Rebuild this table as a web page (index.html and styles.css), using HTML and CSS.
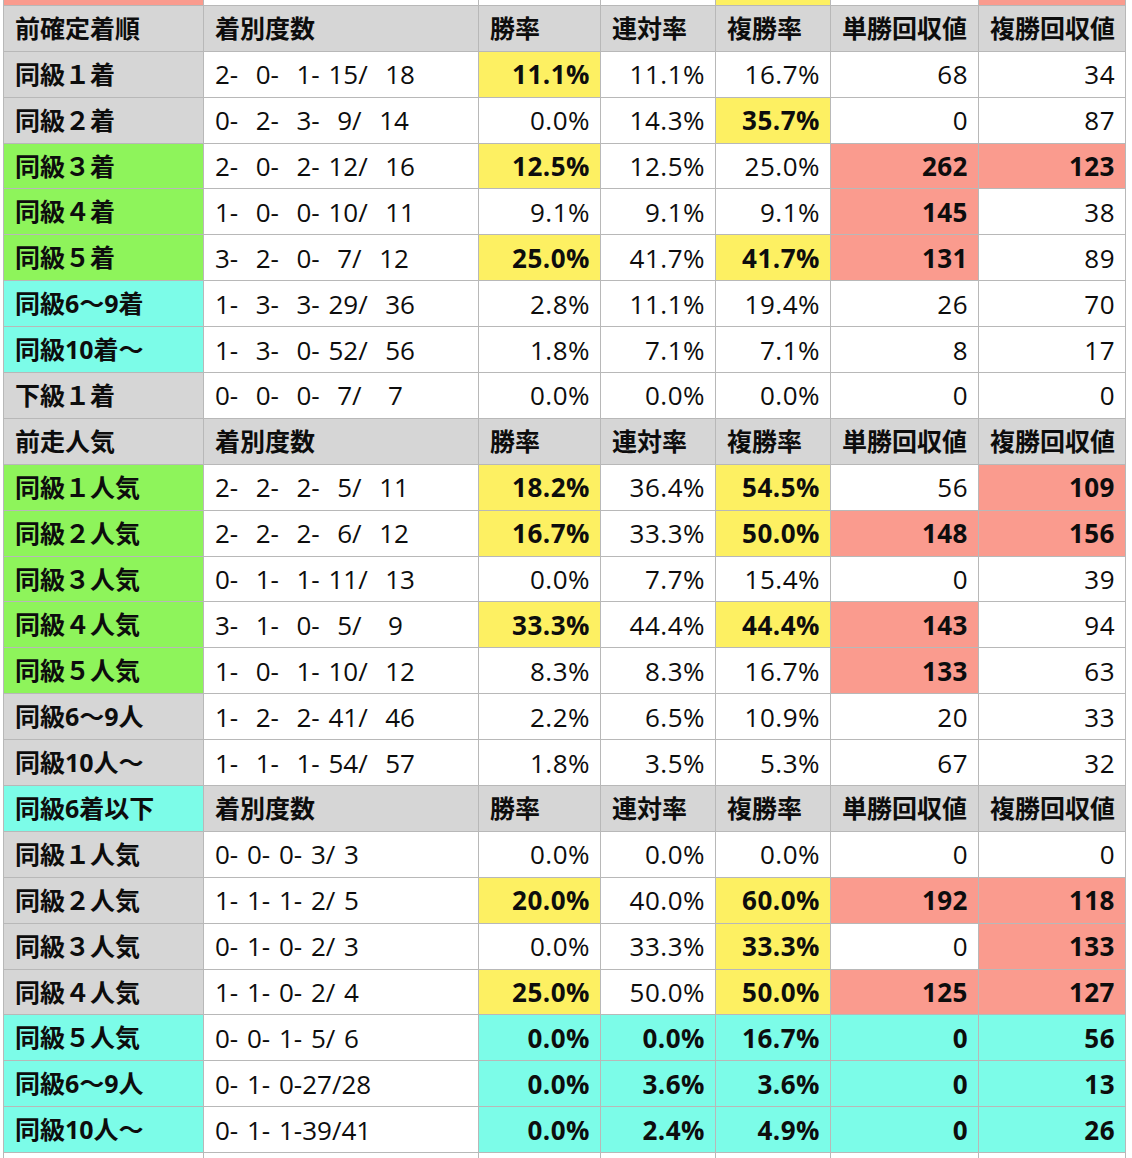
FILE: index.html
```html
<!DOCTYPE html>
<html lang="ja">
<head>
<meta charset="utf-8">
<title>成績表</title>
<link rel="stylesheet" href="styles.css">
</head>
<body>
<div class="sheet">
  <div class="row stub">
    <div class="s"></div><div></div><div></div><div></div><div class="y"></div><div></div><div class="s"></div>
  </div>

  <div class="row head">
    <div class="g lbl">前確定着順</div><div class="g lbl">着別度数</div><div class="g lbl">勝率</div><div class="g lbl">連対率</div><div class="g lbl">複勝率</div><div class="g lbl">単勝回収値</div><div class="g lbl">複勝回収値</div>
  </div>
  <div class="row">
    <div class="g lbl">同級１着</div><div class="cnt">2-  0-  1- 15/  18</div><div class="n y b">11.1%</div><div class="n">11.1%</div><div class="n">16.7%</div><div class="n">68</div><div class="n">34</div>
  </div>
  <div class="row">
    <div class="g lbl">同級２着</div><div class="cnt">0-  2-  3-  9/  14</div><div class="n">0.0%</div><div class="n">14.3%</div><div class="n y b">35.7%</div><div class="n">0</div><div class="n">87</div>
  </div>
  <div class="row">
    <div class="gr lbl">同級３着</div><div class="cnt">2-  0-  2- 12/  16</div><div class="n y b">12.5%</div><div class="n">12.5%</div><div class="n">25.0%</div><div class="n s b">262</div><div class="n s b">123</div>
  </div>
  <div class="row">
    <div class="gr lbl">同級４着</div><div class="cnt">1-  0-  0- 10/  11</div><div class="n">9.1%</div><div class="n">9.1%</div><div class="n">9.1%</div><div class="n s b">145</div><div class="n">38</div>
  </div>
  <div class="row">
    <div class="gr lbl">同級５着</div><div class="cnt">3-  2-  0-  7/  12</div><div class="n y b">25.0%</div><div class="n">41.7%</div><div class="n y b">41.7%</div><div class="n s b">131</div><div class="n">89</div>
  </div>
  <div class="row">
    <div class="c lbl">同級6～9着</div><div class="cnt">1-  3-  3- 29/  36</div><div class="n">2.8%</div><div class="n">11.1%</div><div class="n">19.4%</div><div class="n">26</div><div class="n">70</div>
  </div>
  <div class="row">
    <div class="c lbl">同級10着～</div><div class="cnt">1-  3-  0- 52/  56</div><div class="n">1.8%</div><div class="n">7.1%</div><div class="n">7.1%</div><div class="n">8</div><div class="n">17</div>
  </div>
  <div class="row">
    <div class="g lbl">下級１着</div><div class="cnt">0-  0-  0-  7/   7</div><div class="n">0.0%</div><div class="n">0.0%</div><div class="n">0.0%</div><div class="n">0</div><div class="n">0</div>
  </div>

  <div class="row head">
    <div class="g lbl">前走人気</div><div class="g lbl">着別度数</div><div class="g lbl">勝率</div><div class="g lbl">連対率</div><div class="g lbl">複勝率</div><div class="g lbl">単勝回収値</div><div class="g lbl">複勝回収値</div>
  </div>
  <div class="row">
    <div class="gr lbl">同級１人気</div><div class="cnt">2-  2-  2-  5/  11</div><div class="n y b">18.2%</div><div class="n">36.4%</div><div class="n y b">54.5%</div><div class="n">56</div><div class="n s b">109</div>
  </div>
  <div class="row">
    <div class="gr lbl">同級２人気</div><div class="cnt">2-  2-  2-  6/  12</div><div class="n y b">16.7%</div><div class="n">33.3%</div><div class="n y b">50.0%</div><div class="n s b">148</div><div class="n s b">156</div>
  </div>
  <div class="row">
    <div class="gr lbl">同級３人気</div><div class="cnt">0-  1-  1- 11/  13</div><div class="n">0.0%</div><div class="n">7.7%</div><div class="n">15.4%</div><div class="n">0</div><div class="n">39</div>
  </div>
  <div class="row">
    <div class="gr lbl">同級４人気</div><div class="cnt">3-  1-  0-  5/   9</div><div class="n y b">33.3%</div><div class="n">44.4%</div><div class="n y b">44.4%</div><div class="n s b">143</div><div class="n">94</div>
  </div>
  <div class="row">
    <div class="gr lbl">同級５人気</div><div class="cnt">1-  0-  1- 10/  12</div><div class="n">8.3%</div><div class="n">8.3%</div><div class="n">16.7%</div><div class="n s b">133</div><div class="n">63</div>
  </div>
  <div class="row">
    <div class="g lbl">同級6～9人</div><div class="cnt">1-  2-  2- 41/  46</div><div class="n">2.2%</div><div class="n">6.5%</div><div class="n">10.9%</div><div class="n">20</div><div class="n">33</div>
  </div>
  <div class="row">
    <div class="g lbl">同級10人～</div><div class="cnt">1-  1-  1- 54/  57</div><div class="n">1.8%</div><div class="n">3.5%</div><div class="n">5.3%</div><div class="n">67</div><div class="n">32</div>
  </div>

  <div class="row head">
    <div class="c lbl">同級6着以下</div><div class="g lbl">着別度数</div><div class="g lbl">勝率</div><div class="g lbl">連対率</div><div class="g lbl">複勝率</div><div class="g lbl">単勝回収値</div><div class="g lbl">複勝回収値</div>
  </div>
  <div class="row">
    <div class="g lbl">同級１人気</div><div class="cnt">0- 0- 0- 3/ 3</div><div class="n">0.0%</div><div class="n">0.0%</div><div class="n">0.0%</div><div class="n">0</div><div class="n">0</div>
  </div>
  <div class="row">
    <div class="g lbl">同級２人気</div><div class="cnt">1- 1- 1- 2/ 5</div><div class="n y b">20.0%</div><div class="n">40.0%</div><div class="n y b">60.0%</div><div class="n s b">192</div><div class="n s b">118</div>
  </div>
  <div class="row">
    <div class="g lbl">同級３人気</div><div class="cnt">0- 1- 0- 2/ 3</div><div class="n">0.0%</div><div class="n">33.3%</div><div class="n y b">33.3%</div><div class="n">0</div><div class="n s b">133</div>
  </div>
  <div class="row">
    <div class="g lbl">同級４人気</div><div class="cnt">1- 1- 0- 2/ 4</div><div class="n y b">25.0%</div><div class="n">50.0%</div><div class="n y b">50.0%</div><div class="n s b">125</div><div class="n s b">127</div>
  </div>
  <div class="row">
    <div class="c lbl">同級５人気</div><div class="cnt">0- 0- 1- 5/ 6</div><div class="n c b">0.0%</div><div class="n c b">0.0%</div><div class="n c b">16.7%</div><div class="n c b">0</div><div class="n c b">56</div>
  </div>
  <div class="row">
    <div class="c lbl">同級6～9人</div><div class="cnt">0- 1- 0-27/28</div><div class="n c b">0.0%</div><div class="n c b">3.6%</div><div class="n c b">3.6%</div><div class="n c b">0</div><div class="n c b">13</div>
  </div>
  <div class="row">
    <div class="c lbl">同級10人～</div><div class="cnt">0- 1- 1-39/41</div><div class="n c b">0.0%</div><div class="n c b">2.4%</div><div class="n c b">4.9%</div><div class="n c b">0</div><div class="n c b">26</div>
  </div>
  <div class="row">
    <div></div><div></div><div></div><div></div><div></div><div></div><div></div>
  </div>
</div>
</body>
</html>
```

FILE: styles.css
```css
html, body {
  margin: 0;
  padding: 0;
  background: #ffffff;
  height: 1158px;
  overflow: hidden;
}

body {
  font-family: "Open Sans", "Noto Sans CJK JP", sans-serif;
  font-size: 25px;
  color: #0d0d0d;
}

.sheet {
  margin-left: 3px;
  width: 1123px;
  display: flex;
  flex-direction: column;
  gap: 1px;
  padding: 0 1px;
  box-sizing: border-box;
  background: #b8b8b8;
}

.row {
  display: grid;
  grid-template-columns: 199px 274px 121px 114px 114px 147px 146px;
  column-gap: 1px;
  height: 44.9px;
}

.row.stub {
  height: 4.9px;
}

.row > div {
  background: #ffffff;
  display: flex;
  align-items: center;
  white-space: pre;
  overflow: hidden;
  line-height: 1;
}

.lbl {
  font-weight: 700;
  padding-left: 11px;
}

.cnt {
  padding-left: 11px;
  font-size: 26px;
  word-spacing: 2px;
}

.n {
  justify-content: flex-end;
  padding-right: 10px;
  font-size: 26px;
  letter-spacing: 0.5px;
}

.b {
  font-weight: 700;
}

.row > .g { background: #d6d6d6; }
.row > .gr { background: #8ef45b; }
.row > .c { background: #7cfce8; }
.row > .y { background: #fdf062; }
.row > .s { background: #fa9b8e; }
```
